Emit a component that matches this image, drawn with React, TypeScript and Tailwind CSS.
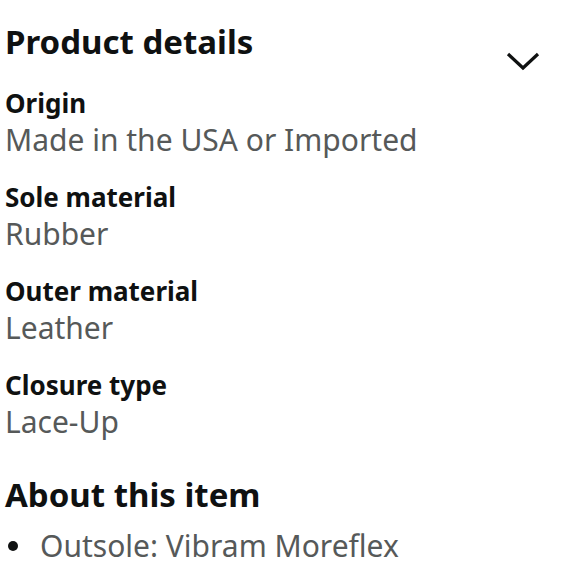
const DETAILS = [
  { label: 'Origin', value: 'Made in the USA or Imported' },
  { label: 'Sole material', value: 'Rubber' },
  { label: 'Outer material', value: 'Leather' },
  { label: 'Closure type', value: 'Lace-Up' },
];

export default function App() {
  return (
    <div className="w-[580px] h-[580px] bg-white overflow-hidden pl-[5px] pr-[40px] pt-[22px]" style={{ fontFamily: '"Noto Sans", Arial, sans-serif' }}>
      <div className="flex items-start justify-between">
        <h2 className="text-[33px] leading-[40px] font-bold text-[#0f1111]">Product details</h2>
        <svg width="34" height="20" viewBox="0 0 34 20" className="mt-[29px]" fill="none">
          <path d="M2 3 L17 17 L32 3" stroke="#0f1111" strokeWidth="3.2" />
        </svg>
      </div>
      <div className="mt-[14px]">
        {DETAILS.map((d) => (
          <div key={d.label} className="mb-[20px]">
            <div className="text-[26px] leading-[36px] font-bold text-[#0f1111]">{d.label}</div>
            <div className="text-[30px] leading-[38px] text-[#565959]">{d.value}</div>
          </div>
        ))}
      </div>
      <h2 className="mt-[34px] text-[33px] leading-[40px] font-bold text-[#0f1111]">About this item</h2>
      <ul className="mt-[12px]">
        <li className="flex items-center text-[30px] leading-[38px] text-[#565959]">
          <span className="w-[10px] h-[10px] rounded-full bg-[#0f1111] ml-[3px] mr-[22px]" />
          Outsole: Vibram Moreflex
        </li>
      </ul>
    </div>
  );
}
